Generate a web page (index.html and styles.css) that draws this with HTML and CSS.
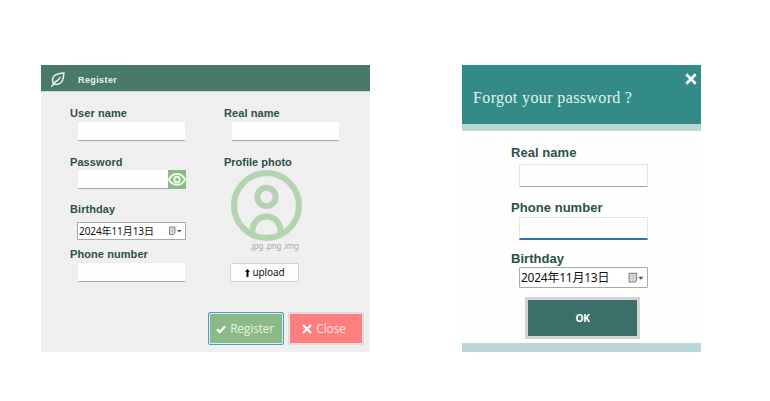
FILE: index.html
```html
<!DOCTYPE html>
<html lang="en">
<head>
<meta charset="utf-8">
<title>Register</title>
<link rel="stylesheet" href="styles.css">
</head>
<body>
<main class="desktop">
  <section class="window register">
    <header class="titlebar">
      <svg class="leaf" viewBox="0 0 14 15" fill="none" stroke="#e9f4ec" stroke-width="1.5" stroke-linecap="round" stroke-linejoin="round"><path d="M13 1C9 1.300 5 1.500 2.800 4.400C1 6.800 1.300 9.600 2.600 11.800C6 13.200 10 12 11.500 8.500C12.600 6.300 12.400 3.600 13 1Z"/><path d="M.8 14.200L4.500 9.700C5.500 8.800 7.500 8.500 9 5.500"/></svg>
      <h1 class="title">Register</h1>
    </header>
    <div class="columns">
      <div class="column">
        <div class="field"><label class="label">User name</label><div class="input"></div></div>
        <div class="field"><label class="label">Password</label><div class="input"><span class="eye"><svg viewBox="0 0 18 19" fill="none" stroke="#e8ffe0" stroke-width="2"><path d="M1 9.500C4.500 2.300 13.500 2.300 17 9.500C13.500 16.500 4.500 16.500 1 9.500Z"/><circle cx="9" cy="9.500" r="2.700"/></svg></span></div></div>
        <div class="field dated"><label class="label">Birthday</label><div class="date"><span class="value">2024年11月13日</span><svg class="calendar" viewBox="0 0 14 10"><path d="M1.500 1h5.500v6l-1.500 1.500h-4z" fill="#dedee3" stroke="#88838a"/><path d="M2 3h5M2 5h5M4.500 1.500v6" stroke="#b6b4bd" stroke-width=".5"/><path d="M9 4h4.500l-2.250 2.500z" fill="#405477"/></svg></div></div>
        <div class="field"><label class="label">Phone number</label><div class="input"></div></div>
      </div>
      <div class="column">
        <div class="field"><label class="label">Real name</label><div class="input"></div></div>
        <div class="photo">
          <span class="label profile">Profile photo</span>
          <svg class="avatar" viewBox="0 0 70 70" fill="none" stroke="#b5d3b3" stroke-width="6"><circle cx="35" cy="35" r="32"/><circle cx="35" cy="26.500" r="9"/><path d="M21 62C20.500 40.500 49.500 40.500 49 62"/></svg>
          <span class="types">.jpg .png .img</span>
          <button class="upload"><svg viewBox="0 0 5 8"><path d="M2.500 0L5 2.800H3.500V8H1.500V2.800H0z"/></svg><span>upload</span></button>
        </div>
      </div>
    </div>
    <footer class="actions">
      <button class="action confirm"><svg viewBox="0 0 10 10" fill="none" stroke="#fff" stroke-width="2.300"><path d="M1 5.200L3.700 8L9 2.500"/></svg><span>Register</span></button>
      <button class="action close"><svg viewBox="0 0 10 10" fill="none" stroke="#fff" stroke-width="2.200"><path d="M1 1L9 9M9 1L1 9"/></svg><span>Close</span></button>
    </footer>
  </section>

  <section class="window recover">
    <header class="banner">
      <svg class="dismiss" viewBox="0 0 12 12" fill="none" stroke="#fff" stroke-width="2.700"><path d="M1.300 1.300L10.700 10.700M10.700 1.300L1.300 10.700"/></svg>
      <h2 class="question">Forgot your password<span class="mark">?</span></h2>
    </header>
    <div class="recover-form">
      <label class="label">Real name</label><div class="input"></div>
      <label class="label phone">Phone number</label><div class="input focused"></div>
      <label class="label birth">Birthday</label>
      <div class="date"><span class="value">2024年11月13日</span><svg class="calendar" viewBox="0 0 14 10"><path d="M1 1h6.500v6l-1.500 1.500h-5z" fill="#dedee3" stroke="#88838a"/><path d="M2 3h5M2 5h5M4.500 1.500v6" stroke="#b6b4bd" stroke-width=".5"/><path d="M9 4h4.500l-2.250 2.500z" fill="#405477"/></svg></div>
      <button class="ok">OK</button>
    </div>
  </section>
</main>
</body>
</html>
```
FILE: styles.css
```css
* { box-sizing: border-box; }
body { margin: 0; background: #fff; font-family: "Liberation Sans", sans-serif; }
h1, h2 { margin: 0; }
button { margin: 0; padding: 0; border: 0; }
svg { display: block; flex: none; }
.desktop { width: 770px; height: 401px; padding: 65px 0 0 41px; display: flex; align-items: flex-start; gap: 92px; overflow: hidden; }
.window { height: 287px; display: flex; flex-direction: column; flex: none; }

.register { width: 329px; background: #efefef; }
.titlebar { height: 27px; flex: none; background: #48796b; border-bottom: 1px solid #c9d8d0; display: flex; align-items: center; padding-left: 10px; }
.leaf { width: 14px; height: 15px; margin-top: 2px; }
.title { margin: 4px 0 0 13px; color: #eaf4ef; font: 700 9px/12px "Liberation Sans", sans-serif; letter-spacing: .4px; }

.columns { display: flex; padding: 14px 0 0 29px; height: 220px; }
.column { width: 154px; flex: none; display: flex; flex-direction: column; }
.field { margin-bottom: 13px; }
.label { display: block; height: 16px; font-weight: 700; font-size: 11px; line-height: 15px; color: #2d5046; white-space: nowrap; letter-spacing: .08px; }
.input { width: 107px; height: 19px; margin-left: 8px; background: #fefefe; border-bottom: 1px solid #a6a6a6; display: flex; justify-content: flex-end; }
.eye { width: 18px; height: 19px; flex: none; background: #8bba87; }
.eye svg { width: 18px; height: 19px; }
.field:nth-child(2) { margin-bottom: 12px; }
.field:nth-child(2) .label { line-height: 16px; }
.field:nth-child(2) .input { width: 108px; }
.field.dated { margin-bottom: 7px; }
.dated .label { line-height: 17px; }
.date { display: flex; align-items: center; justify-content: space-between; background: #fff; border: 1px solid #a9a9ad; color: #111; white-space: nowrap; }
.dated .date { width: 109px; height: 18px; margin: 5px 0 0 7px; padding: 0 3px 0 1px; }
.value { font: 10px/16px "Noto Sans", "Noto Sans CJK SC", sans-serif; letter-spacing: -.08px; }
.calendar { width: 14px; height: 10px; }
.photo { display: flex; flex-direction: column; align-items: flex-start; }
.profile { line-height: 16px; letter-spacing: 0; }
.avatar { width: 71px; height: 71px; margin-left: 7px; }
.types { margin-left: 26px; height: 12px; color: #a8a8a8; font: 8px/10px "Noto Sans", sans-serif; white-space: nowrap; letter-spacing: -.22px; }
.upload { width: 69px; height: 19px; margin: 10px 0 0 6px; background: #fdfdfd; border: 1px solid #d2d2d2; border-radius: 2px; display: flex; align-items: center; justify-content: center; gap: 3px; font: 10px/16px "Noto Sans", sans-serif; letter-spacing: -.15px; color: #111; }
.upload svg { width: 5px; height: 8px; }
.upload span { margin-top: -2px; }

.actions { display: flex; padding-left: 167px; gap: 4px; }
.action { width: 76px; height: 33px; display: flex; align-items: center; justify-content: center; gap: 4px; padding-right: 2px; font: 400 12px/18px "Open Sans", sans-serif; letter-spacing: -.2px; border-radius: 2px; }
.action svg { width: 10px; height: 10px; }
.confirm { background: #8bba87; border: 1px solid #4c9bd9; box-shadow: inset 0 0 0 1px #e0efe1; color: #e5f2e1; }
.close { background: #ff7f7f; border: 1px solid #d9dde0; box-shadow: inset 0 0 0 1px #f6dddd; color: #ffe4e4; padding-right: 4px; }

.recover { width: 239px; background: #fefefe; border-bottom: 9px solid #b9d7d5; }
.banner { height: 66px; flex: none; background: #328b87; border-bottom: 7px solid #b9d7d5; display: flex; flex-direction: column; }
.dismiss { width: 12px; height: 12px; margin: 8px 4px 0 0; align-self: flex-end; }
.question { display: flex; margin: 3px 0 0 11px; color: #e4f1ef; font: 400 16px/20px "Liberation Serif", serif; letter-spacing: .38px; }
.mark { margin-left: 4px; }
.recover-form { padding: 14px 0 0 48px; display: flex; flex-direction: column; align-items: flex-start; }
.recover .label { margin-left: 1px; font-size: 13px; line-height: 15px; letter-spacing: .05px; }
.recover .input { width: 129px; height: 23px; margin: 3px 0 0 9px; border: 1px solid #e4e5e5; border-bottom-color: #a8a8a8; }
.recover .phone { margin-top: 12px; line-height: 17px; }
.recover .input.focused { margin-top: 2px; border-bottom: 2px solid #2876b8; }
.recover .birth { margin-top: 11px; line-height: 16px; }
.recover .date { width: 129px; height: 21px; margin-left: 9px; padding: 0 3px 0 1px; border-radius: 1px; }
.recover .value { font-size: 12px; letter-spacing: -.25px; }
.recover .calendar { width: 16px; height: 12px; }
.ok { width: 115px; height: 42px; margin: 9px 0 0 15px; background: #3b6f69; border: 3px solid #d2d2d2; color: #fff; font: 700 10px/14px "Open Sans", sans-serif; letter-spacing: -.4px; }
```
